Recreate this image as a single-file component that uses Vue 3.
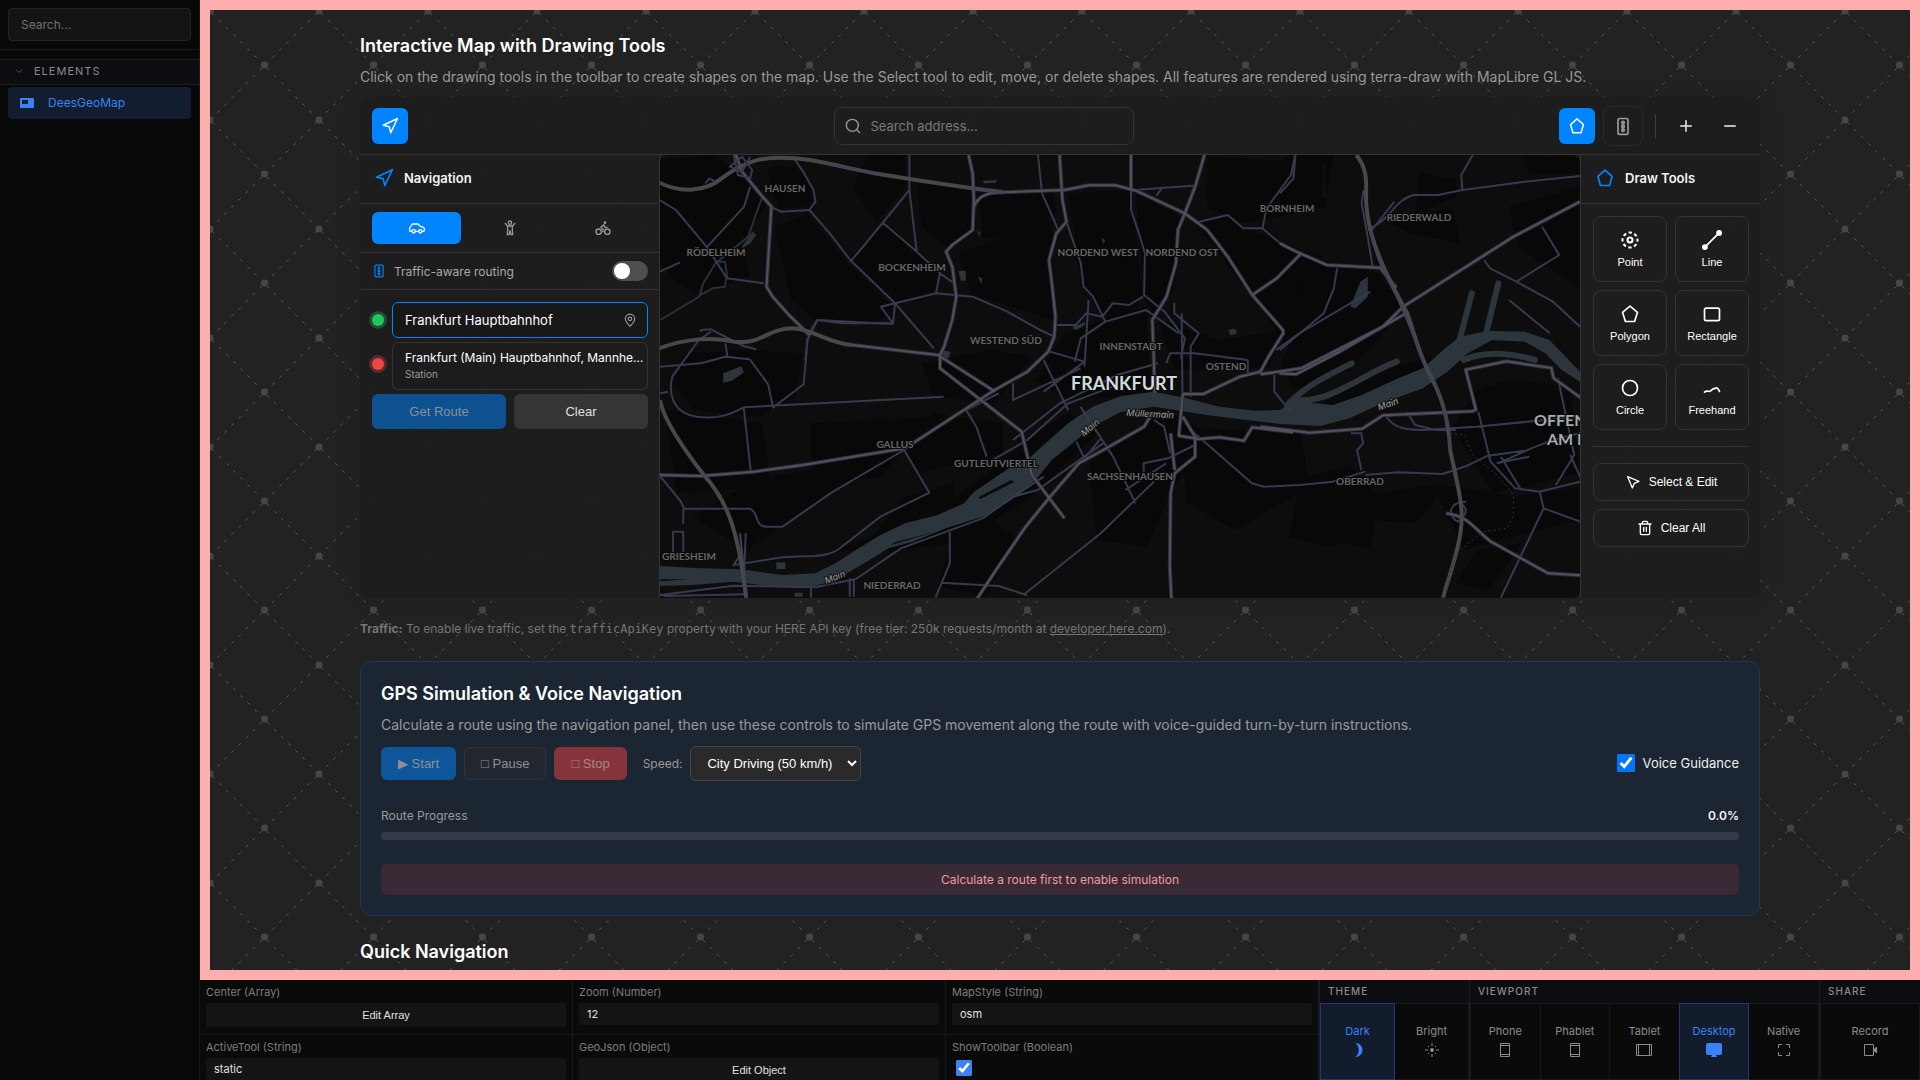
<script setup>
import { ref } from 'vue'

const query = ref('')
const address = ref('')
const start = ref('Frankfurt Hauptbahnhof')
const end = ref('')
const traffic = ref(false)
const voice = ref(true)
const speed = ref('city')
const showToolbar = ref(true)
const zoom = ref('12')
const mapStyle = ref('osm')
const activeTool = ref('static')

const tools = [
  { id: 'point', label: 'Point' },
  { id: 'line', label: 'Line' },
  { id: 'polygon', label: 'Polygon' },
  { id: 'rectangle', label: 'Rectangle' },
  { id: 'circle', label: 'Circle' },
  { id: 'freehand', label: 'Freehand' },
]

const districts = [
  ['HAUSEN', 785, 192], ['RÖDELHEIM', 716, 256], ['BOCKENHEIM', 912, 271],
  ['NORDEND WEST', 1098, 256], ['NORDEND OST', 1182, 256], ['BORNHEIM', 1287, 212],
  ['RIEDERWALD', 1419, 221], ['WESTEND SÜD', 1006, 344], ['INNENSTADT', 1131, 350],
  ['OSTEND', 1226, 370], ['GALLUS', 895, 448], ['GUTLEUTVIERTEL', 996, 467],
  ['SACHSENHAUSEN', 1130, 480], ['GRIESHEIM', 689, 560], ['NIEDERRAD', 892, 589],
  ['OBERRAD', 1360, 485],
]

const waterNames = [
  ['Main', 836, 580, -22], ['Main', 1092, 430, -40], ['Main', 1389, 407, -20], ['Müllermain', 1150, 417, 3],
]
</script>

<template>
  <div class="app">
    <aside class="sidebar">
      <div class="side-search">
        <input v-model="query" type="text" placeholder="Search..." aria-label="Search elements" />
      </div>
      <nav>
        <button class="section" type="button">
          <svg width="10" height="10" viewBox="0 0 10 10" fill="none" stroke="currentColor"><path d="M2 3.500l3 3 3-3" /></svg>
          <span>ELEMENTS</span>
        </button>
        <a class="item" href="#geomap">
          <svg width="14" height="10" viewBox="0 0 14 10"><path fill="#3b82f6" fill-rule="evenodd" d="M1 0h12a1 1 0 0 1 1 1v8a1 1 0 0 1-1 1H1a1 1 0 0 1-1-1V1a1 1 0 0 1 1-1zM2 2v4h6V2z" /></svg>
          <span>DeesGeoMap</span>
        </a>
      </nav>
    </aside>

    <main class="stage">
      <svg class="pattern" aria-hidden="true" width="100%" height="100%">
        <defs>
          <pattern id="net" x="0" y="1" width="109" height="109" patternUnits="userSpaceOnUse">
            <g stroke="#5a5a5a" stroke-dasharray="3 7" stroke-dashoffset="-3">
              <path d="M0 0l54 54M109 0L55 54M54 55L0 109M55 55l54 54" />
            </g>
            <g fill="#464646">
              <circle cx="0" cy="0" r="3.500" /><circle cx="109" cy="0" r="3.500" />
              <circle cx="0" cy="109" r="3.500" /><circle cx="109" cy="109" r="3.500" /><circle cx="54.500" cy="54" r="3.500" />
            </g>
          </pattern>
        </defs>
        <rect width="100%" height="100%" fill="url(#net)" />
      </svg>

      <div class="content">
        <h2>Interactive Map with Drawing Tools</h2>
        <p class="desc">Click on the drawing tools in the toolbar to create shapes on the map. Use the Select tool to edit, move, or delete shapes. All features are rendered using terra-draw with MapLibre GL JS.</p>

        <section id="geomap" class="geomap">
          <header class="toolbar">
            <div class="group">
              <button class="sq active" type="button" aria-label="Navigation">
                <svg class="ic" width="18" height="18" viewBox="0 0 24 24"><path d="M3 11L22 2l-9 19-2-8z" /></svg>
              </button>
            </div>
            <div class="address">
              <svg class="ic" width="16" height="16" viewBox="0 0 24 24"><circle cx="11" cy="11" r="9" /><path d="M22 22l-4-4" /></svg>
              <input v-model="address" type="text" placeholder="Search address..." aria-label="Search address" />
            </div>
            <div class="group">
              <button class="sq active" type="button" aria-label="Draw tools">
                <svg class="ic" width="18" height="18" viewBox="0 0 24 24"><path d="M12 2.500L20.500 10 17.500 21H6.500L3.500 10z" /></svg>
              </button>
              <button class="sq outlined" type="button" aria-label="Traffic">
                <svg class="ic" width="20" height="20" viewBox="0 0 24 24"><rect x="6" y="3" width="12" height="19" rx="2" /><circle cx="12" cy="8" r="1.500" /><circle cx="12" cy="12.500" r="1.500" /><circle cx="12" cy="17" r="1.500" /></svg>
              </button>
              <i class="sep"></i>
              <button class="sq" type="button" aria-label="Zoom in"><svg class="ic" width="18" height="18" viewBox="0 0 24 24"><path d="M12 5v14M5 12h14" /></svg></button>
              <button class="sq" type="button" aria-label="Zoom out"><svg class="ic" width="18" height="18" viewBox="0 0 24 24"><path d="M5 12h14" /></svg></button>
            </div>
          </header>

          <div class="panes">
            <section class="nav-pane">
              <h3>
                <svg class="ic blue" width="20" height="20" viewBox="0 0 24 24"><path d="M3 11L22 2l-9 19-2-8z" /></svg>
                Navigation
              </h3>
              <div class="modes">
                <button class="on" type="button" aria-label="Car">
                  <svg class="ic" width="16" height="16" viewBox="0 0 24 24"><path d="M19 17h3c1 0 1-1 1-2v-2c0-1-1-2-2-2.400L17 9.500 13.500 6H5L2 10.500 1 12v4c0 .6.400 1 1 1h2M9.500 17h5" /><circle cx="7" cy="17" r="2.500" /><circle cx="17" cy="17" r="2.500" /></svg>
                </button>
                <button type="button" aria-label="Walk">
                  <svg class="ic" width="16" height="16" viewBox="0 0 24 24"><circle cx="12" cy="4" r="2.500" /><path d="M5 5l3 4h8l3-4M8.500 9v6l-.5 7h2.500l1.500-6 1.500 6H16l-.5-7V9" /></svg>
                </button>
                <button type="button" aria-label="Bike">
                  <svg class="ic" width="16" height="16" viewBox="0 0 24 24"><circle cx="18.500" cy="17.500" r="4" /><circle cx="5.500" cy="17.500" r="4" /><circle cx="15" cy="4" r="1" /><path d="M12 17.500V14l-3-3 4-4 2 4h3" /></svg>
                </button>
              </div>
              <div class="aware">
                <svg class="ic blue" width="14" height="14" viewBox="0 0 24 24"><rect x="5" y="2" width="14" height="20" rx="2" /><circle cx="12" cy="7" r="1.500" /><circle cx="12" cy="12" r="1.500" /><circle cx="12" cy="17" r="1.500" /></svg>
                <label for="aware">Traffic-aware routing</label>
                <input id="aware" v-model="traffic" type="checkbox" role="switch" />
              </div>
              <div class="route">
                <div class="stop">
                  <i class="pin green"></i>
                  <div class="field">
                    <input v-model="start" class="focus" type="text" aria-label="Start point" />
                    <svg class="ic" width="14" height="14" viewBox="0 0 24 24"><path d="M20 10c0 5-5 10-8 13-3-3-8-8-8-13a8 8 0 0 1 16 0z" /><circle cx="12" cy="10" r="3" /></svg>
                    <button class="result" type="button">
                      <span>Frankfurt (Main) Hauptbahnhof, Mannheimer Straße</span>
                      <small>Station</small>
                    </button>
                  </div>
                </div>
                <div class="stop">
                  <i class="pin red"></i>
                  <div class="field"><input v-model="end" type="text" aria-label="End point" /></div>
                </div>
                <div class="actions">
                  <button class="go" type="button" disabled>Get Route</button>
                  <button type="button">Clear</button>
                </div>
              </div>
            </section>

            <div class="map">
              <svg viewBox="660 155 920 443" preserveAspectRatio="xMidYMid slice" role="img" aria-label="Map of Frankfurt">
                <rect x="0" y="0" width="2400" height="1200" fill="#0d0d0d" />
                <g transform="translate(640 0) scale(.40816 .33333)">
                  <g class="land">
                    <path d="M48 480l130-15 60 50 70 100-60 120 20 90-120 60-60-40-40-60zM310 500l70 0 40 60 0 60-80 5zM330 680l80-40 100 150 110 130-40 50-150-10-60-60zM510 780l90-110 80 80 50 60-10 70-90 30zM560 465h90v100l-70 100-60-100zM680 550l130 20 0 120-60 50-60-60zM780 760l230-100 0 300-200-80zM830 580l180-5 10 60-50 60-130 20zM1050 580l150-10 30 300-30 120-60-30-60-120zM1215 580l110 70-20 230-50 60-20-50zM1350 660l90-10 50 40 180 80-10 220-80 40-80-140-80-130zM1390 470l290 20 0 130-200 50-90-50zM1700 465l-110 0 10 120 80 10z" />
                    <path d="M110 1060l140-10 150 10-20 130-90 60-160-20-50-80zM860 1050l100 20-90 140-150-20-30-100zM1040 1000l200-80 10 260-200 20-80-60zM1270 960l150 60 160-30-40 110-230 10zM60 1230l240 40 20 190-230 20zM420 1270l300 -20-130 180-170 20zM280 1440l320-70-340 280-130-100zM720 1240l170 30 0 90-210 60-50-90zM820 1450l160-160 70-50 70 60-170 200-180 130-200 30zM1100 1390l190-160 100 70-90 180-60 160-120 -20zM1320 1280l300 20 20 160-180 130-120-80zM1620 1430l120-30 60 80 180-30-80 120-100-10-10 90-60-20-50 10-90-30zM2050 1170l80-30 150 20 20 260-210 60-100-200zM2140 1490l160-30 0 100-280 90-80-200zM2050 1650l110-20-80 140-80-20zM450 1660l120-50 80-120 120-40-10 140-100 40zM760 1630l90-80 70 60-70 180-120-30zM1750 1130l190-60-40 100-240 60z" />
                    <path d="M1600 760l210 60 60 110-130 180-140 60-30-80 60-150zM1580 470l90 20 0 110-90-20zM1840 670l150-50 20 110-120-30zM2160 470l140 0 0 50-120 0zM2130 620l170-60 0 300-150-120zM1900 640l100-50 0-50 -90-20z" />
                  </g>
                  <g class="water">
                    <path d="M250 740l25-45 10 10-15 25-20 15zM780 812l18 0 0 30-12 0zM1130 712l10 10-5 10zM1060 985l30-20 0 10-20 15zM1445 990l15-2 2 14-18 2zM1740 920l25-75 18-15 0 60-30 35zM840 542l35-2-4 8-28 2zM828 830l10 5-1 18zM826 690l8 10-3 10z" />
                  </g>
                  <path class="brook" d="M300 590l-15 50-20 70-40 40-40 40-30 60-10 40-95 70M190 785l18 0 5 40-5 35-30 5-30 20" />
                  <g transform="translate(49 900)">
                    <path class="water" d="M0 798L100 805 200 808 300 825 380 820 430 790 480 750 540 705 600 670 680 645 745 610 770 575 860 500 900 480 935 440 1000 370 1060 320 1130 288 1210 275 1290 295 1370 320 1460 332 1520 330 1560 290 1600 310 1649 315 1719 285 1809 235 1869 205 1919 150 1959 110 2029 92 2119 95 2179 120 2219 170 2254 215 2260 250 2209 210 2169 160 2119 125 2039 120 1979 160 1929 215 1869 265 1769 310 1689 355 1619 378 1519 372 1450 362 1340 345 1210 320 1130 335 1060 380 1000 440 960 480 920 540 860 600 790 650 700 685 620 725 560 745 500 790 430 840 360 865 280 860 180 845 80 855 0 858z" />
                    <path class="water" d="M155 220l45-22 5 20-30 25-20 5zM285 787h22v20h-22zM330 878h20v12h-20zM1010 80l30-10-20 20zM1392 90l12-4 8 12-12 8zM690 150l22 5-5 20-20-3z" />
                    <path class="ink" d="M780 592L860 540 868 546 785 597zM565 735l115-42-105 34zM0 838l70 0-70 6z" />
                    <path class="dock" d="M1540 310C1590 250 1640 225 1695 190M1560 300C1640 310 1710 230 1805 185M1989 -20L1959 120M2054 -50L2024 100M1969 180C2020 150 2090 160 2144 180" />
                  </g>

                  <g class="minor">
                    <path d="M380 480l20 35 25 55 5 35-15 25-70 5-25-15M415 630l50 70 50 80 110 130 35 50 60 85M660 570l18 185 57 65-10 60-100 30-35 10 30 50 5-60M725 880l90 10 85 45 80 55 35 20M660 465v105l-65 98-45 67-35 50M595 668l83 87M975 465l10 115 40 110M1045 665l15 55 20 70 7 70 23 30 30 75M1203 570v60l22 80 12 50-2 125 50 50 50 80-10 60M1215 570l60-6 80-7M1280 562l-15 25M1370 665l70-20 38 40 47 0 43 45M1525 685l10-60 60-100 10-60M48 600l40 30 75 110 50 95 90 15M270 560l-15 60-90 120M48 815l50-28M405 1080l5-60 25-60 60 10 120 0M735 820l35 30M1018 975l50 0 25-35 40 10 25-40 40 5 35-25M1140 965l-60 50-15 70M1140 965l100-35 80 70" />
                  </g>
                  <g transform="translate(49 900)" class="minor">
                    <path d="M0 200L100 190 160 170 220 178M160 130l5 38M220 178l45 75 12 70 75-70 10-140M125 95L95 120 30 230C20 280 30 340 90 350C140 358 170 345 205 322L695 290M205 322L222 510M100 95l0-5 25-2 80 50 30 10M370 90l15-30 185 12M0 280L20 275M0 528l50 75 10 23 160 0C245 640 230 680 260 680L300 680 420 578 598 450 660 578 540 650 435 750C400 775 360 765 300 772L180 795 200 760M57 626v45M32 775v-80h25v80M0 885l180-28 200 5 100-25L590 745 790 655 860 595 940 530M205 860l5-160M370 865v28M465 835v55M475 835v55M10 888l200-5M710 690v100L675 893M690 848l140 10 70 28M890 885L1080 700l130-155M830 280L750 330l25 50 25 90M865 250v50l165-95M865 420L980 310 1120 225 1220 190M815 480L900 420l100-110 110-50M940 180l60 150M955 155l85 30-100 90M1050 0l-10 200M1030 320l80 150 55 140M1020 425l20 50 40-60M1085 430l-80 70-80 70-60 20M1185 520l0-30 60-15 65-40M1140 570l100-80M1240 190l10-30 60 0 130 20M1210 360l25 20 15 80M1310 400l140 150 30 10 90-5M1280 290l-2-250M1300 290l0-150 20-40-60-60 0-30M1440 180l0 40 30 0M1505 225l0 50 40 60M1510 150l50-45 180-130M1568 555l80-10 80-30M1718 510l-10-60 15-20-5-30-25 0M1728 525l80-8 110 5 60-25 50-30 90-15M1830 335l20 40 50 15 50 0M1780 350C1800 390 1840 390 1870 390L2000 380 2254 350M2005 335l30 150 60 80 60 10 100-30M2060 470l50 100M2180 100L2080 0M2155 575l10 50 90 40M2165 625L2060 893M2195 555l45-90-40-230M2130 470l-80 20M2230 465l30 80M2050 490C2100 470 2140 430 2254 400M1975 605c-40 0-50 40-20 60 20-20 30-40 0-60" />
                  </g>
                  <g transform="translate(1568 0)" class="minor">
                    <path d="M38 465l-5 70-33 45M472 465l-28 60 3 45-60 15-60 0C280 600 270 660 225 682M447 570L600 545 735 528M642 680l42 85-105 80 90 60 66 75M500 780l15 25 64 40M140 805l-8 60-25 75L0 1050M205 570l-5 40 12 80 15 110M225 690L280 605" />
                  </g>

                  <g v-for="layer in ['case', 'core']" :key="layer" class="major" :class="layer">
                    <path d="M890 577L1040 570 1100 556 1165 556 1215 572 1335 640 1390 690 1440 770 1500 885 1575 990 1576 1000 1540 1070 1520 1115 1470 1130 1380 1182 1330 1182" />
                    <path d="M235 465l15 50 50 75 22 30-4 80-8 160 15 30 40 55 50 60M805 465l10 55 3 80-3 90-50 45-15 20 15 45 10 90-10 70-20 80-10 25 0 40 200 190 25 130 80 130M818 620c10-30 30-43 72-43M520 1035l210 30 140 110M1028 465l7 135 10 65-25 35-18 80 8 80 8 90-3 60-15 45-51 60-80 55-220 175-250 50-120 20-130 13-100-3M1203 465v107M1383 465l-23 95-25 80-17 50-5 100-23 100-35 70 4 120 2 100M1255 1240l-20 40-100 70-60 40-70 100-60 90-70 125-70 130M1330 1182l-10 125 50 10 50-5 60 10 20-40 100 15M1330 1250l30 60 0 60-50 50-10 60-2 220 5 120 20 20M1300 1300l10 110M1567 1120l40 3 110-70 155-110" />
                    <path d="M2303 605L2140 710 1870 920 1820 980 1620 1105 1520 1123M1500 885l60-50 60-75M1568 730l40 25 75 40 130 8 40 60M1520 1280l120 18 130-12 50-40 220-12 8-5-25-120 100-25 110 20 5 30 90 80M1975 1540c60 10 70 50 110 85l140 95 78 6" />
                  </g>

                  <g class="motor">
                    <path d="M48 548C100 580 160 575 200 535C260 480 300 468 380 475C450 482 520 510 600 525C700 545 780 560 890 577M48 1045C110 1015 180 1010 230 1025C300 1035 310 985 375 985C430 990 460 1030 520 1035M49 1200C60 1280 160 1430 160 1430C210 1500 240 1580 260 1793M1755 465C1790 520 1775 560 1780 620C1785 720 1830 830 1880 940C1900 1010 1905 1050 1930 1110C1960 1180 1980 1240 1985 1350C2005 1470 2020 1520 2010 1600C2000 1680 1970 1770 1968 1793" />
                  </g>
                  <path class="ring" d="M450 488C500 500 560 518 600 525M800 562L890 577M1790 690C1800 760 1815 800 1850 880C1890 980 1905 1050 1930 1110C1960 1180 1980 1240 1985 1350M245 1600L262 1793" />
                  <g class="minor"><path d="M230 465l10 60 30 10 5-25-25-40-30 30 30 15M270 470l-20 45M160 550l10-15 15 10" /></g>
                  <path class="border" d="M1985 1300l35 5 20 60 60 60 40 60 0 60-15 40-60 10-60 60-20 60-10 60" />
                </g>

                <g class="district">
                  <text v-for="d in districts" :key="d[0]" :x="d[1]" :y="d[2]">{{ d[0] }}</text>
                </g>
                <g class="river-name">
                  <text v-for="(w, i) in waterNames" :key="i" :transform="`translate(${w[1]} ${w[2]}) rotate(${w[3]})`">{{ w[0] }}</text>
                </g>
                <text class="city" x="1124" y="390">FRANKFURT</text>
                <text class="town" x="1534" y="426">OFFENBACH</text>
                <text class="town" x="1547" y="445">AM MAIN</text>
              </svg>
            </div>

            <section class="draw-pane">
              <h3>
                <svg class="ic blue" width="20" height="20" viewBox="0 0 24 24"><path d="M12 2.500L20.500 10 17.500 21H6.500L3.500 10z" /></svg>
                Draw Tools
              </h3>
              <div class="tools">
                <div class="grid">
                  <button v-for="t in tools" :key="t.id" type="button">
                    <svg class="ic" width="20" height="20" viewBox="0 0 24 24">
                      <g v-if="t.id === 'point'"><circle class="ticks" cx="12" cy="12" r="9" /><circle cx="12" cy="12" r="3" stroke-width="2.500" /></g>
                      <g v-else-if="t.id === 'line'"><path d="M4 20L20 4" /><circle cx="3.500" cy="20.500" r="2.500" fill="currentColor" /><circle cx="20.500" cy="3.500" r="2.500" fill="currentColor" /></g>
                      <path v-else-if="t.id === 'polygon'" d="M12 2.500L21 10 17.500 21H6.500L3 10z" />
                      <rect v-else-if="t.id === 'rectangle'" x="3" y="5" width="18" height="15" rx="2" />
                      <circle v-else-if="t.id === 'circle'" cx="12" cy="12" r="9" />
                      <path v-else d="M3 17c2-2 4-1 6-1s3-3 5-3 2-2 4-1 2 3 3 4" />
                    </svg>
                    <span>{{ t.label }}</span>
                  </button>
                </div>
                <hr />
                <button class="wide" type="button">
                  <svg class="ic" width="16" height="16" viewBox="0 0 24 24"><path d="M4 4l7 17 3-7 7-3z" /></svg>
                  Select &amp; Edit
                </button>
                <button class="wide" type="button">
                  <svg class="ic" width="16" height="16" viewBox="0 0 24 24"><path d="M3 6h18M19 6v14c0 1-1 2-2 2H7c-1 0-2-1-2-2V6M8 6V4c0-1 1-2 2-2h4c1 0 2 1 2 2v2M10 11v6M14 11v6" /></svg>
                  Clear All
                </button>
              </div>
            </section>
          </div>
        </section>

        <p class="note"><strong>Traffic:</strong> To enable live traffic, set the <code>trafficApiKey</code> property with your HERE API key (free tier: 250k requests/month at <a href="#here">developer.here.com</a>).</p>

        <section class="gps">
          <h2>GPS Simulation &amp; Voice Navigation</h2>
          <p class="desc">Calculate a route using the navigation panel, then use these controls to simulate GPS movement along the route with voice-guided turn-by-turn instructions.</p>
          <div class="controls">
            <button class="play" type="button" disabled>▶ Start</button>
            <button class="pause" type="button" disabled>□ Pause</button>
            <button class="halt" type="button" disabled>□ Stop</button>
            <label class="speed" for="speed">Speed:</label>
            <select id="speed" v-model="speed">
              <option value="walk">Walking (5 km/h)</option>
              <option value="city">City Driving (50 km/h)</option>
            </select>
            <label class="voice"><input v-model="voice" type="checkbox" />Voice Guidance</label>
          </div>
          <div class="progress-head"><span>Route Progress</span><b>0.0%</b></div>
          <div class="bar" role="progressbar" aria-label="Route Progress" aria-valuenow="0" aria-valuemin="0" aria-valuemax="100"></div>
          <div class="warn">Calculate a route first to enable simulation</div>
        </section>

        <h2>Quick Navigation</h2>
      </div>
    </main>

    <footer class="dock-bar">
      <div class="props">
        <div class="prop"><span>Center (Array)</span><button type="button">Edit Array</button></div>
        <div class="prop"><label for="p-zoom">Zoom (Number)</label><input id="p-zoom" v-model="zoom" type="text" /></div>
        <div class="prop"><label for="p-style">MapStyle (String)</label><input id="p-style" v-model="mapStyle" type="text" /></div>
        <div class="prop"><label for="p-tool">ActiveTool (String)</label><input id="p-tool" v-model="activeTool" type="text" /></div>
        <div class="prop"><span>GeoJson (Object)</span><button type="button">Edit Object</button></div>
        <div class="prop"><label for="p-bar">ShowToolbar (Boolean)</label><input id="p-bar" v-model="showToolbar" type="checkbox" /></div>
      </div>
      <div class="cluster theme">
        <h4>THEME</h4>
        <div>
          <button class="on" type="button">Dark
            <svg width="16" height="16" viewBox="0 0 16 16"><path fill="currentColor" d="M5 1c10 0 10 14 0 14 5-3 5-11 0-14z" /></svg>
          </button>
          <button type="button">Bright
            <svg width="16" height="16" viewBox="0 0 16 16" fill="none" stroke="currentColor"><circle cx="8" cy="8" r="2" fill="currentColor" stroke="none" /><path d="M8 1v3M8 12v3M1 8h3M12 8h3M4 4l1 1M11 11l1 1M12 4l-1 1M5 11l-1 1" /></svg>
          </button>
        </div>
      </div>
      <div class="cluster viewport">
        <h4>VIEWPORT</h4>
        <div>
          <button type="button">Phone
            <svg width="16" height="16" viewBox="0 0 16 16"><path fill="currentColor" fill-rule="evenodd" d="M4 1h8a1 1 0 0 1 1 1v12a1 1 0 0 1-1 1H4a1 1 0 0 1-1-1V2a1 1 0 0 1 1-1zM4 2v1h8V2zM4 4v8h8V4zM4 13v1h8v-1z" /></svg>
          </button>
          <button type="button">Phablet
            <svg width="16" height="16" viewBox="0 0 16 16"><path fill="currentColor" fill-rule="evenodd" d="M4 1h8a1 1 0 0 1 1 1v12a1 1 0 0 1-1 1H4a1 1 0 0 1-1-1V2a1 1 0 0 1 1-1zM4 2v1h8V2zM4 4v8h8V4zM4 13v1h8v-1z" /></svg>
          </button>
          <button type="button">Tablet
            <svg width="16" height="16" viewBox="0 0 16 16"><path fill="currentColor" fill-rule="evenodd" d="M1 2h14a1 1 0 0 1 1 1v10a1 1 0 0 1-1 1H1a1 1 0 0 1-1-1V3a1 1 0 0 1 1-1zM1 3v10h1V3zM3 3v10h10V3zM14 3v10h1V3z" /></svg>
          </button>
          <button class="on" type="button">Desktop
            <svg width="16" height="16" viewBox="0 0 16 16"><path fill="currentColor" d="M2 1h12a2 2 0 0 1 2 2v8a2 2 0 0 1-2 2h-4l1 2H5l1-2H2a2 2 0 0 1-2-2V3a2 2 0 0 1 2-2z" /></svg>
          </button>
          <button type="button">Native
            <svg width="16" height="16" viewBox="0 0 16 16" fill="none" stroke="currentColor"><path d="M2.500 6V2.500H6M10 2.500h3.500V6M13.500 10v3.500H10M6 13.500H2.500V10" /></svg>
          </button>
        </div>
      </div>
      <div class="cluster share">
        <h4>SHARE</h4>
        <div>
          <button type="button">Record
            <svg width="16" height="16" viewBox="0 0 16 16"><path fill="currentColor" fill-rule="evenodd" d="M3 2h8a1 1 0 0 1 1 1v4l2-2h1v6h-1l-2-2v4a1 1 0 0 1-1 1H3a1 1 0 0 1-1-1V3a1 1 0 0 1 1-1zM3 3v10h8V3z" /></svg>
          </button>
        </div>
      </div>
    </footer>
  </div>
</template>

<style>
body {
  margin: 0;
  background: #0a0a0a;
}
</style>

<style scoped>
* {
  box-sizing: border-box;
}
.app {
  display: grid;
  grid-template: minmax(0, 1fr) 100px / 200px minmax(0, 1fr);
  height: 100vh;
  overflow: hidden;
  color: #fff;
  font-family: Inter, sans-serif;
}
button,
input,
select {
  margin: 0;
  font-family: "Liberation Sans", sans-serif;
  color: inherit;
}
h2,
h3,
h4,
p {
  margin: 0;
}
svg {
  display: block;
  flex: none;
}
.ic {
  fill: none;
  stroke: currentColor;
  stroke-width: 2;
  stroke-linecap: round;
  stroke-linejoin: round;
}
.ticks {
  stroke-width: 2.5;
  stroke-linecap: butt;
  stroke-dasharray: 4 3.068;
  stroke-dashoffset: 2;
}
.blue {
  color: #0084ff;
}

/* sidebar */
.sidebar {
  grid-row: 1 / 3;
  border-right: 1px solid #1a1a1a;
  background: #080808;
}
.side-search {
  padding: 8px;
  border-bottom: 1px solid #1a1a1a;
}
.side-search input {
  display: block;
  width: 100%;
  height: 33px;
  padding: 0 12px;
  border: 1px solid #242424;
  border-radius: 4px;
  background: #141414;
  font-family: Inter, sans-serif;
  font-size: 12px;
}
.side-search input::placeholder {
  color: #707070;
}
.section {
  display: flex;
  align-items: center;
  gap: 10px;
  width: 100%;
  height: 26px;
  margin-top: 9px;
  padding: 0 14px 2px;
  border: solid #1a1a1f;
  border-width: 1px 0;
  background: #0c0d11;
  color: #8a8a8a;
  font-family: Inter, sans-serif;
  font-size: 11px;
  letter-spacing: 1px;
}
.section svg {
  color: #555;
}
.item {
  display: flex;
  align-items: center;
  gap: 14px;
  height: 32px;
  margin: 2px 8px;
  padding: 0 12px 1px;
  border-radius: 4px;
  background: #121d2f;
  color: #3b82f6;
  font-size: 12px;
  text-decoration: none;
}

/* stage */
.stage {
  position: relative;
  overflow: hidden;
  border: 10px solid #ffaeaf;
  background: #222;
}
.pattern {
  position: absolute;
  inset: 0;
}
.content {
  position: relative;
  max-width: 1400px;
  margin: 0 auto;
  padding-top: 24px;
}
h2 {
  font-size: 18px;
  font-weight: 600;
  line-height: 24px;
}
.desc {
  margin-top: 8px;
  color: #999;
  font-size: 14px;
  line-height: 21px;
  white-space: nowrap;
}

/* map widget */
.geomap {
  margin-top: 10px;
  border-radius: 12px;
  background: #1e1e1efa;
  box-shadow: 0 0 24px #0000001f;
  overflow: hidden;
}
.toolbar {
  display: flex;
  align-items: center;
  justify-content: space-between;
  height: 58px;
  padding: 0 12px;
  border-bottom: 1px solid #333;
}
.group {
  display: flex;
  align-items: center;
  gap: 8px;
}
.sq {
  display: grid;
  place-items: center;
  width: 36px;
  height: 36px;
  padding: 0;
  border: 0;
  border-radius: 6px;
  background: none;
  color: #eee;
}
.sq.active {
  background: #0084ff;
  color: #fff;
}
.sq.outlined {
  width: 40px;
  height: 40px;
  border: 1px solid #2b2b2b;
  border-radius: 8px;
  color: #999;
}
.sep {
  width: 1px;
  height: 24px;
  margin: 0 4px;
  background: #404040;
}
.address {
  position: relative;
  width: 300px;
}
.address svg {
  position: absolute;
  top: 11px;
  left: 11px;
  color: #999;
}
.address input {
  display: block;
  width: 100%;
  height: 38px;
  padding: 0 36px;
  border: 1px solid #333;
  border-radius: 8px;
  background: none;
  font-family: Inter, sans-serif;
  font-size: 13px;
}
.address input::placeholder {
  color: #7a7a7a;
}
.panes {
  display: grid;
  grid-template-columns: 300px minmax(0, 1fr) 180px;
  height: 443px;
}
.nav-pane {
  border-right: 1px solid #333;
}
.draw-pane {
  border-left: 1px solid #333;
}
h3 {
  display: flex;
  align-items: center;
  gap: 10px;
  height: 49px;
  padding: 0 14px 2px;
  border-bottom: 1px solid #333;
  color: #f4f4f4;
  font-size: 13px;
  font-weight: 600;
}
.modes {
  display: grid;
  grid-template-columns: repeat(3, 1fr);
  gap: 4px;
  padding: 8px 11px 8px 12px;
  border-bottom: 1px solid #333;
}
.modes button {
  display: grid;
  place-items: center;
  height: 32px;
  border: 0;
  border-radius: 6px;
  background: none;
  color: #999;
}
.modes .on {
  background: #0084ff;
  color: #fff;
}
.aware {
  display: flex;
  align-items: center;
  gap: 8px;
  height: 37px;
  padding: 0 11px 0 12px;
  border-bottom: 1px solid #333;
}
.aware label {
  flex: 1;
  color: #aaa;
  font-size: 12px;
}
.aware input {
  appearance: none;
  width: 36px;
  height: 20px;
  padding: 2px;
  border-radius: 10px;
  background: #4f4f4f;
}
.aware input::before {
  content: "";
  display: block;
  width: 16px;
  height: 16px;
  border-radius: 8px;
  background: #fff;
}
.route {
  padding: 12px 11px 12px 12px;
}
.stop {
  display: flex;
  align-items: center;
  gap: 8px;
  margin-bottom: 8px;
}
.pin {
  flex: none;
  width: 12px;
  height: 12px;
  border-radius: 6px;
}
.green {
  background: #22c55e;
  box-shadow: 0 0 0 3px #22c55e4d;
}
.red {
  background: #ef4444;
  box-shadow: 0 0 0 3px #ef44444d;
}
.field {
  position: relative;
  flex: 1;
}
.field input {
  display: block;
  width: 100%;
  height: 36px;
  padding: 0 36px 0 12px;
  border: 1px solid #333;
  border-radius: 6px;
  background: #181818;
  font-family: Inter, sans-serif;
  font-size: 13px;
}
.field .focus {
  border-color: #0084ff;
}
.field > svg {
  position: absolute;
  top: 11px;
  right: 11px;
  color: #999;
}
.result {
  position: absolute;
  z-index: 1;
  top: 40px;
  left: 0;
  right: 0;
  height: 48px;
  padding: 0 2px 0 12px;
  border: 1px solid #333;
  border-radius: 6px;
  background: #1c1c1c;
  font-family: Inter, sans-serif;
  text-align: left;
}
.result span {
  display: block;
  overflow: hidden;
  font-size: 12px;
  line-height: 16px;
  text-overflow: ellipsis;
  white-space: nowrap;
}
.result small {
  display: block;
  color: #999;
  font-size: 10px;
  line-height: 16px;
}
.actions {
  display: grid;
  grid-template-columns: 1fr 1fr;
  gap: 8px;
  margin-top: 12px;
}
.actions button {
  height: 35px;
  border: 0;
  border-radius: 6px;
  background: #353535;
  color: #e0e0e0;
  font-size: 13px;
}
.actions .go {
  background: #0d5190;
  color: #8b8f94;
}
.tools {
  padding: 12px 11px 12px 12px;
}
.grid {
  display: grid;
  grid-template-columns: 1fr 1fr;
  gap: 8px;
}
.grid button {
  display: flex;
  flex-direction: column;
  align-items: center;
  justify-content: center;
  gap: 6px;
  height: 66px;
  padding: 0;
  border: 1px solid #333;
  border-radius: 8px;
  background: none;
  font-size: 11px;
}
hr {
  height: 1px;
  margin: 16px 0;
  border: 0;
  background: #333;
}
.wide {
  display: flex;
  align-items: center;
  justify-content: center;
  gap: 8px;
  width: 100%;
  height: 38px;
  margin-bottom: 8px;
  border: 1px solid #333;
  border-radius: 8px;
  background: none;
  font-size: 12px;
}

/* map drawing */
.map {
  overflow: hidden;
  border-radius: 8px 8px 8px 0;
}
.map svg {
  width: 100%;
  height: 100%;
}
.map path {
  vector-effect: non-scaling-stroke;
  stroke-linejoin: round;
}
.land path {
  fill: #080808;
}
.water,
.water path {
  fill: #2c353c;
}
.ink {
  fill: #0b0b0b;
}
.brook {
  fill: none;
  stroke: #253138;
  stroke-width: 2;
}
.dock {
  fill: none;
  stroke: #2c353c;
  stroke-width: 6;
  stroke-linecap: round;
}
.minor path {
  fill: none;
  stroke: #363a4f;
  stroke-width: 2;
}
.major path {
  fill: none;
  stroke: #50505f;
  stroke-width: 2;
}
.case path {
  stroke: #2e2e38;
  stroke-width: 4;
}
.motor path {
  fill: none;
  stroke: #484848;
  stroke-width: 4;
}
.ring {
  fill: none;
  stroke: #40435a;
  stroke-width: 2;
}
.border {
  fill: none;
  stroke: #333;
  stroke-width: 1;
  stroke-dasharray: 2 3;
}
.district text {
  fill: #666;
  stroke: #0a0a0a;
  stroke-width: 2;
  paint-order: stroke;
  font-family: Lato, sans-serif;
  font-size: 10px;
  font-weight: 700;
  text-anchor: middle;
}
.river-name text {
  fill: #a2a2a2;
  stroke: #111;
  stroke-width: 2;
  paint-order: stroke;
  font-size: 9px;
  font-style: italic;
  text-anchor: middle;
}
.city,
.town {
  stroke: #0a0a0a;
  stroke-width: 2;
  paint-order: stroke;
  font-family: Lato, sans-serif;
  font-weight: 700;
}
.city {
  fill: #cfdadd;
  font-size: 18px;
  text-anchor: middle;
}
.town {
  fill: #a3abad;
  font-size: 16px;
}

/* notes and simulation */
.note {
  margin-top: 22px;
  color: #757575;
  font-size: 12px;
  line-height: 18px;
}
.note code {
  font-family: "DejaVu Sans Mono", monospace;
  font-size: 12px;
}
.note a {
  color: inherit;
}
.gps {
  margin: 23px 0 24px;
  padding: 20px;
  border: 1px solid #1b3960;
  border-radius: 12px;
  background: #1c2633;
}
.controls {
  display: flex;
  align-items: center;
  gap: 8px;
  height: 36px;
  margin-top: 10px;
}
.controls button {
  height: 33px;
  padding: 0 17px;
  border: 0;
  border-radius: 6px;
  font-size: 13px;
}
.controls .play {
  background: #0e5599;
  color: #8d9297;
}
.controls .pause {
  padding: 0 16px;
  border: 1px solid #30353d;
  background: #22272f;
  color: #8d9093;
}
.controls .halt {
  background: #86343c;
  color: #a58488;
}
.speed {
  margin-left: 8px;
  color: #999;
  font-size: 12px;
}
select {
  height: 35px;
  padding: 0 12px;
  border: 1px solid #444;
  border-radius: 6px;
  background: #2a2a2a;
  font-size: 13px;
}
.voice {
  display: flex;
  align-items: center;
  gap: 8px;
  margin-left: auto;
  color: #eee;
  font-size: 13px;
}
.voice input {
  width: 18px;
  height: 18px;
  accent-color: #0075ff;
}
.progress-head {
  display: flex;
  justify-content: space-between;
  margin-top: 26px;
  color: #999;
  font-size: 12px;
  line-height: 18px;
}
.progress-head b {
  color: #f4f4f4;
  font-weight: 600;
}
.bar {
  height: 8px;
  margin-top: 7px;
  border-radius: 4px;
  background: #323b47;
}
.warn {
  margin-top: 24px;
  padding: 6px 12px;
  border-radius: 6px;
  background: #3a2a35;
  color: #f29a9d;
  font-size: 12px;
  line-height: 19px;
  text-align: center;
}

/* bottom dock */
.dock-bar {
  display: grid;
  grid-template-columns: minmax(0, 1fr) 150px 350px 101px;
  overflow: hidden;
  background: #0a0a0a;
}
.props {
  display: grid;
  grid-template-columns: repeat(3, 1fr);
  grid-auto-rows: 55px;
  overflow: hidden;
}
.prop {
  padding: 5px 6px 0;
  border: solid #1a1a1a;
  border-width: 0 1px 1px 0;
  color: #7d7d7d;
  font-size: 11px;
}
.prop > span,
.prop > label {
  display: block;
  line-height: 14px;
}
.prop button,
.prop input {
  display: block;
  width: 100%;
  height: 24px;
  margin-top: 4px;
  padding: 0 8px;
  border: 0;
  border-radius: 2px;
  background: #141414;
  color: #e0e0e0;
  font-size: 11px;
}
.prop input {
  height: 22px;
  font-family: Inter, sans-serif;
}
.prop input[type="checkbox"] {
  width: 16px;
  height: 16px;
  margin: 6px 4px;
  accent-color: #3b82f6;
}
.cluster {
  display: flex;
  flex-direction: column;
  border-left: 1px solid #1c1c1f;
  background: #19191b;
}
h4 {
  height: 23px;
  padding-left: 8px;
  background: #0c0d11;
  color: #8a8a8a;
  font-size: 10px;
  font-weight: 500;
  letter-spacing: 1px;
  line-height: 23px;
}
.cluster > div {
  display: flex;
  flex: 1;
  gap: 1px;
  padding: 1px;
}
.cluster button {
  display: flex;
  flex: 1 1 0;
  flex-direction: column;
  align-items: center;
  justify-content: center;
  gap: 4px;
  padding: 0 0 2px;
  border: 0;
  background: #0a0a0a;
  color: #8a8a8a;
  font-family: Inter, sans-serif;
  font-size: 11px;
}
.cluster .on {
  outline: 1px solid #1e3a6e;
  background: #121c2d;
  color: #3b82f6;
}
</style>
